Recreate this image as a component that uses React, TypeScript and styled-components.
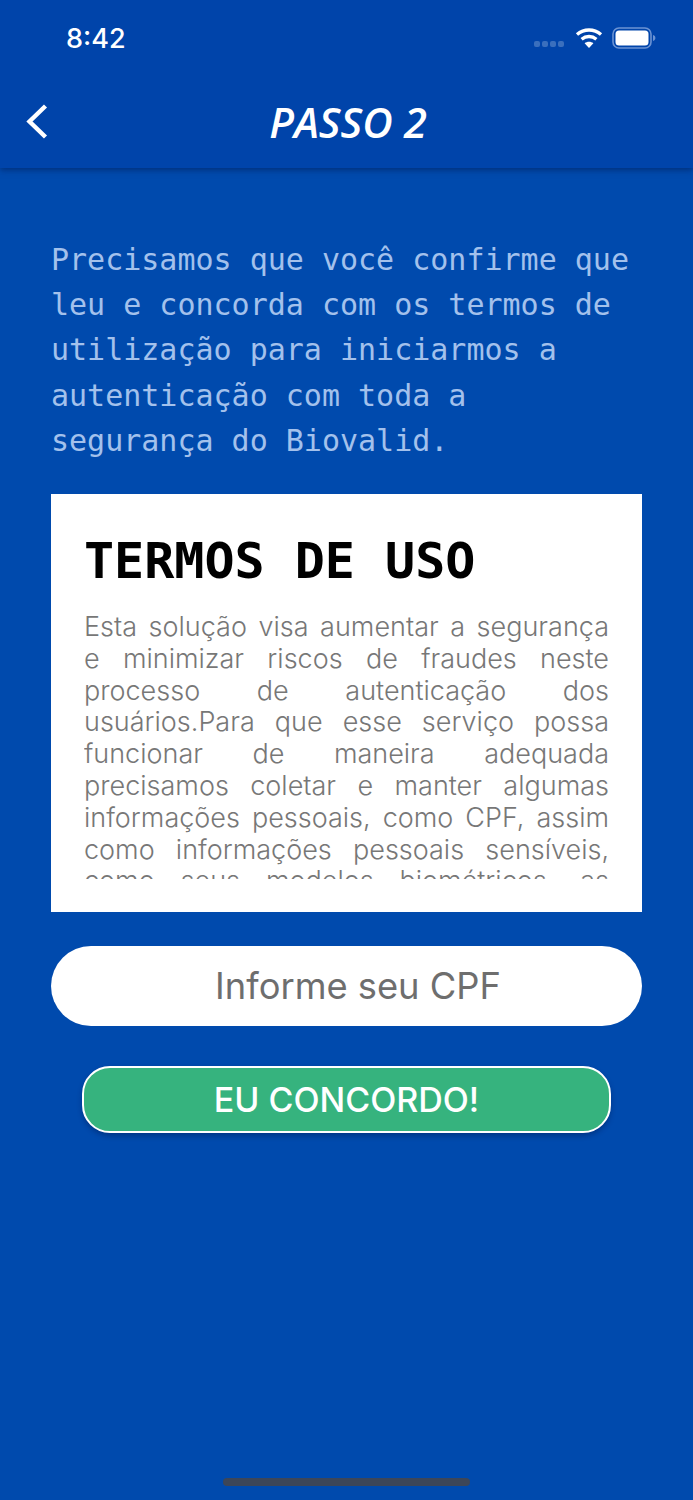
import React from 'react';
import styled, { createGlobalStyle } from 'styled-components';

const GlobalStyle = createGlobalStyle`
  html, body {
    margin: 0;
    padding: 0;
    background: #004aad;
  }
  * {
    box-sizing: border-box;
  }
`
const Page = styled.div`
  display: flex;
  flex-direction: column;
  width: 693px;
  height: 1500px;
  overflow: hidden;
  background: #004aad;
`
const Header = styled.header`
  height: 168px;
  flex-shrink: 0;
  background: #0044aa;
  box-shadow: 0 2px 6px rgba(0, 25, 80, 0.55);
`
const StatusBar = styled.div`
  display: flex;
  align-items: center;
  justify-content: space-between;
  height: 76px;
  padding: 0 37px 0 66px;
`
const Clock = styled.span`
  font-family: Inter, sans-serif;
  font-size: 27px;
  font-weight: 500;
  color: #ffffff;
`
const StatusIcons = styled.div`
  display: flex;
  align-items: center;
  gap: 9px;
`
const SignalDots = styled.div`
  display: flex;
  gap: 2px;
  margin-top: 12px;
  margin-right: 2px;
`
const SignalDot = styled.span`
  width: 6px;
  height: 6px;
  border-radius: 2px;
  background: #3a6fbd;
`
const NavBar = styled.nav`
  display: flex;
  align-items: center;
  justify-content: center;
  position: relative;
  height: 92px;
`
const BackButton = styled.div`
  position: absolute;
  left: 20px;
  top: 27px;
  display: flex;
`
const Title = styled.h1`
  margin: -2px 0 0 3px;
  font-family: "Open Sans", sans-serif;
  font-size: 42px;
  font-style: italic;
  font-weight: 600;
  color: #ffffff;
`
const Content = styled.main`
  display: flex;
  flex: 1;
  flex-direction: column;
  padding: 69px 51px 0;
`
const Intro = styled.p`
  margin: 0;
  height: 257px;
  font-family: "DejaVu Sans Mono", monospace;
  font-size: 30px;
  line-height: 45.2px;
  color: #a3c1ec;
`
const TermsCard = styled.section`
  height: 418px;
  padding: 34px 33px 0;
  background: #ffffff;
`
const TermsTitle = styled.h2`
  margin: 0 0 17px;
  font-family: "DejaVu Sans Mono", monospace;
  font-size: 50px;
  font-weight: 700;
  line-height: 66px;
  color: #000000;
`
const TermsText = styled.div`
  height: 268px;
  overflow: hidden;
  font-family: Inter, sans-serif;
  font-size: 27px;
  font-weight: 300;
  line-height: 31.8px;
  text-align: justify;
  color: #777777;
`
const CpfField = styled.div`
  display: flex;
  align-items: center;
  justify-content: center;
  height: 80px;
  margin-top: 34px;
  padding-left: 23px;
  border-radius: 40px;
  background: #ffffff;
  font-family: Inter, sans-serif;
  font-size: 36.3px;
  font-weight: 400;
  color: #6e6e6e;
`
const AgreeButton = styled.button`
  align-self: center;
  width: 529px;
  height: 67px;
  margin-top: 40px;
  border: 2px solid #ffffff;
  border-radius: 28px;
  background: #36b37e;
  box-shadow: 0 3px 5px rgba(0, 20, 70, 0.35);
  font-family: Inter, sans-serif;
  font-size: 34px;
  font-weight: 500;
  color: #ffffff;
`
const HomeIndicator = styled.div`
  align-self: center;
  width: 247px;
  height: 8px;
  margin-bottom: 14px;
  border-radius: 4px;
  background: #3c4658;
`

const termsText = 'Esta solução visa aumentar a segurança e minimizar riscos de fraudes neste processo de autenticação dos usuários.Para que esse serviço possa funcionar de maneira adequada precisamos coletar e manter algumas informações pessoais, como CPF, assim como informações pessoais sensíveis, como seus modelos biométricos, as quais serão utilizadas apenas para a finalidade de autenticação.';

export default function App() {
  return (
    <Page>
      <GlobalStyle />
      <Header>
        <StatusBar>
          <Clock>8:42</Clock>
          <StatusIcons>
            <SignalDots>
              {[0, 1, 2, 3].map((dot) => <SignalDot key={dot} />)}
            </SignalDots>
            <svg width="28" height="22" viewBox="0 0 28 22" fill="none" stroke="#fff" strokeWidth="3.4">
              <path d="M2 7.5C9 1.5 19 1.5 26 7.5" />
              <path d="M6.6 12.2C11 8.6 17 8.6 21.4 12.2" />
              <path d="M14 21l-4.4-4.8c2.6-2 6.2-2 8.8 0z" fill="#fff" stroke="none" />
            </svg>
            <svg width="44" height="22" viewBox="0 0 44 22" fill="none">
              <rect x="1" y="1" width="38" height="20" rx="6" stroke="#6b93d3" strokeWidth="1.6" />
              <rect x="3.5" y="3.5" width="33" height="15" rx="3.5" fill="#fff" />
              <path d="M41 8c1.6.4 2.4 1.6 2.4 3s-.8 2.6-2.4 3z" fill="#6b93d3" />
            </svg>
          </StatusIcons>
        </StatusBar>
        <NavBar>
          <BackButton>
            <svg width="36" height="36" viewBox="0 0 36 36" fill="none" stroke="#fff" strokeWidth="4.4">
              <path d="M25.5 3L9.5 18.5L25.5 34" />
            </svg>
          </BackButton>
          <Title>PASSO 2</Title>
        </NavBar>
      </Header>
      <Content>
        <Intro>Precisamos que você confirme que leu e concorda com os termos de utilização para iniciarmos a autenticação com toda a segurança do Biovalid.</Intro>
        <TermsCard>
          <TermsTitle>TERMOS DE USO</TermsTitle>
          <TermsText>{termsText}</TermsText>
        </TermsCard>
        <CpfField>Informe seu CPF</CpfField>
        <AgreeButton>EU CONCORDO!</AgreeButton>
      </Content>
      <HomeIndicator />
    </Page>
  );
}
